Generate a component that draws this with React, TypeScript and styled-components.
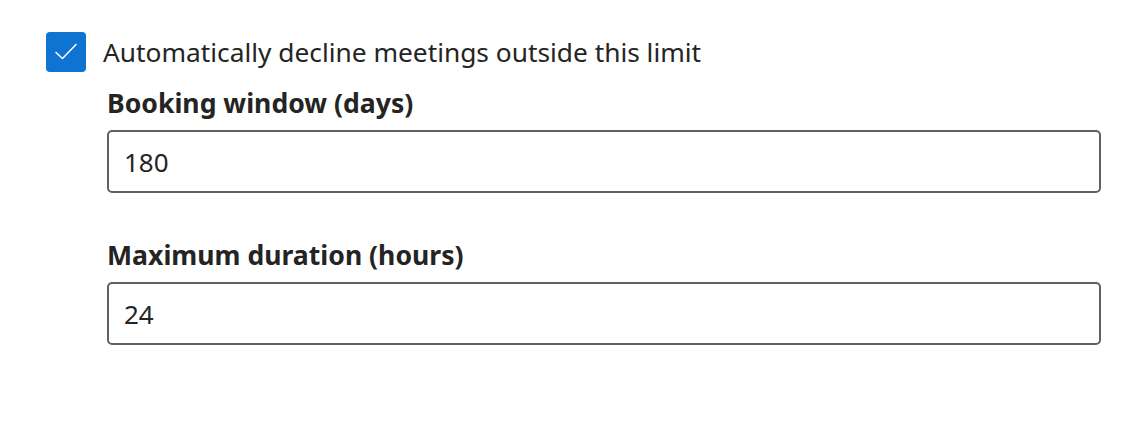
import * as React from 'react';
import {useState} from 'react';
import styled, {createGlobalStyle} from 'styled-components';

const GlobalStyle = createGlobalStyle`
  body {
    margin: 0;
    background: #fff;
    font-family: "Noto Sans", "Open Sans", sans-serif;
    color: #242424;
  }
`

const Page = styled.div`
  padding: 32px 0 0 46px;
`

const CheckRow = styled.label`
  display: flex;
  align-items: center;
  gap: 17px;
  height: 40px;
  cursor: pointer;
`

const Box = styled.span<{$checked: boolean}>`
  width: 40px;
  height: 40px;
  box-sizing: border-box;
  border-radius: 4px;
  display: flex;
  align-items: center;
  justify-content: center;
  background: ${p => p.$checked ? '#0f74d1' : '#fff'};
  border: 2px solid ${p => p.$checked ? '#0f74d1' : '#616161'};
`

const CheckText = styled.span`
  font-size: 26.3px;
  line-height: 36px;
  color: #242424;
`

const Fields = styled.div`
  margin-left: 61px;
  margin-top: 13px;
  width: 994px;
  display: flex;
  flex-direction: column;
  gap: 44px;
`

const Field = styled.div`
  display: flex;
  flex-direction: column;
  gap: 9px;
`

const Label = styled.label`
  font-size: 26.6px;
  line-height: 36px;
  font-weight: 700;
  color: #242424;
`

const Input = styled.input`
  box-sizing: border-box;
  width: 100%;
  height: 63px;
  border: 2px solid #616161;
  border-radius: 5px;
  padding: 0 15px;
  font-family: inherit;
  font-size: 26px;
  color: #242424;
  outline: none;
  background: #fff;
`

function App() {
  const [checked, setChecked] = useState(true)
  const [days, setDays] = useState('180')
  const [hours, setHours] = useState('24')
  return (
    <Page>
      <GlobalStyle/>
      <CheckRow onClick={() => setChecked(!checked)}>
        <Box $checked={checked}>
          {checked && <svg width="26" height="26" viewBox="0 0 26 26">
            <path d="M3 13.5 L9.5 19.5 L23 5.5" fill="none" stroke="#fff" strokeWidth="1.5" strokeLinecap="round" strokeLinejoin="round"/>
          </svg>}
        </Box>
        <CheckText>Automatically decline meetings outside this limit</CheckText>
      </CheckRow>
      <Fields>
        <Field>
          <Label>Booking window (days)</Label>
          <Input value={days} onChange={e => setDays(e.target.value)}/>
        </Field>
        <Field>
          <Label>Maximum duration (hours)</Label>
          <Input value={hours} onChange={e => setHours(e.target.value)}/>
        </Field>
      </Fields>
    </Page>
  );
}
export default App
